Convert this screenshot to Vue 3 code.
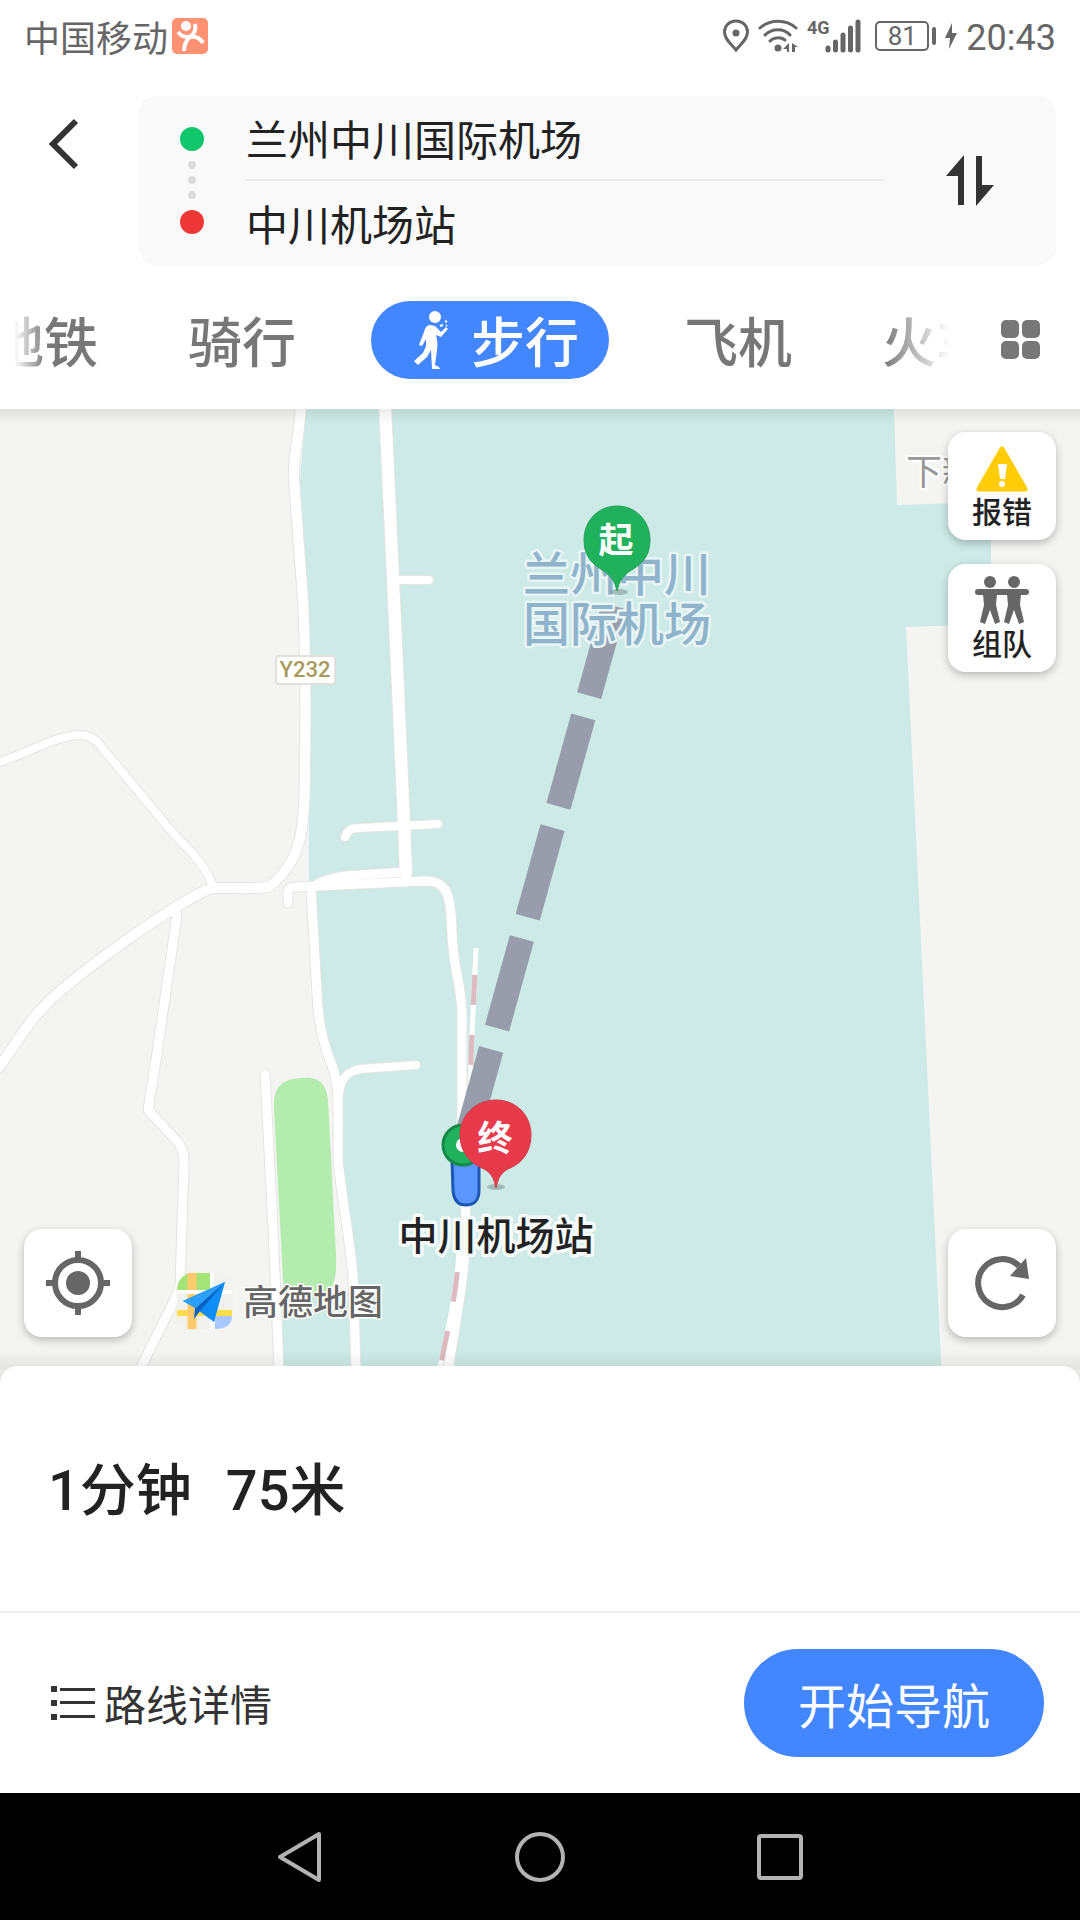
<template>
  <div class="page">
    <header class="header">
      <div class="status-bar">
        <div class="status-left">
          <span class="carrier">中国移动</span>
          <svg width="36" height="36" viewBox="0 0 36 36" aria-hidden="true">
            <rect width="36" height="36" rx="5" fill="#ff9272" />
            <circle cx="14" cy="8" r="5" fill="#fff" />
            <path d="M6 14C10 19 15 20 19 18C23 15 24 11 23 6M19 18C14 22 12 26 12 33M18 19C24 18 28 20 31 25" fill="none" stroke="#fff" stroke-width="4" />
          </svg>
        </div>
        <div class="status-right">
          <svg width="28" height="34" viewBox="0 0 28 34" aria-hidden="true">
            <path d="M14 2C7 2 2.500 7 2.500 13C2.500 20 9 25 14 31C19 25 25.500 20 25.500 13C25.500 7 21 2 14 2Z" fill="none" stroke="#666" stroke-width="3" />
            <circle cx="14" cy="14" r="3.500" fill="#666" />
          </svg>
          <svg class="wifi" width="40" height="34" viewBox="0 0 40 34" aria-hidden="true">
            <path d="M2 9C12 0 28 0 38 9M7 16C14 9 26 9 32 16M12 22C16 18 23 18 27 21" fill="none" stroke="#666" stroke-width="3" stroke-linecap="round" />
            <circle cx="20" cy="29" r="3.500" fill="#666" />
            <path d="M31 24V33H29V30H25ZM34 24L40 28H37V33H34Z" fill="#666" />
          </svg>
          <svg class="signal" width="54" height="34" viewBox="0 0 54 34" aria-hidden="true">
            <text x="0" y="15" class="network">4G</text>
            <path d="M21 29V31M28.500 23V31M36 16V31M43.500 9V31M51 3V31" stroke="#666" stroke-width="5" stroke-linecap="round" />
          </svg>
          <span class="battery">81</span>
          <span class="battery-cap"></span>
          <svg class="bolt" width="14" height="28" viewBox="0 0 14 28" aria-hidden="true">
            <path d="M8 1L1 16H6L5 27L13 11H8Z" fill="#666" />
          </svg>
          <span class="clock">20:43</span>
        </div>
      </div>

      <div class="search">
        <button class="back" type="button" aria-label="返回">
          <svg width="36" height="54" viewBox="0 0 36 54">
            <path d="M31 4L8 27L31 50" fill="none" stroke="#333" stroke-width="6" />
          </svg>
        </button>
        <div class="route-card">
          <div class="route-dots">
            <i class="dot start"></i>
            <i class="dot"></i>
            <i class="dot"></i>
            <i class="dot"></i>
            <i class="dot end"></i>
          </div>
          <div class="route-fields">
            <input v-model="from" type="text" aria-label="起点" />
            <input v-model="to" type="text" aria-label="终点" />
          </div>
          <button class="swap" type="button" aria-label="交换" @click="swap">
            <svg width="48" height="52" viewBox="0 0 48 52">
              <path d="M18 0V50H12V21H0ZM30 1H36V30H48L30 51Z" fill="#333" />
            </svg>
          </button>
        </div>
      </div>

      <nav class="tabs">
        <div class="tab-list">
          <button
            v-for="tab in tabs"
            :key="tab"
            type="button"
            class="tab"
            :class="{ active: tab === currentTab }"
            @click="currentTab = tab"
          >
            <svg v-if="tab === currentTab" width="36" height="60" viewBox="0 0 36 60" aria-hidden="true">
              <circle cx="22" cy="7" r="6" fill="#fff" />
              <path d="M17 15C14 15 12 18 11 22L6 35L9 36L13 29V36L10 43L1 51L5 55L14 47L18 40L19 59H27L26 57L22 55L24 40C25 34 24 29 23 25L28 27L35 19L33 17L28 22L22 16Z" fill="#fff" />
              <path d="M27 16L30 15M32 12L34 11M34 15L33 16" stroke="#fff" stroke-width="2" />
            </svg>
            {{ tab }}
          </button>
        </div>
        <button class="more" type="button" aria-label="更多">
          <svg width="40" height="40" viewBox="0 0 40 40" fill="#777">
            <rect width="18" height="18" rx="5" />
            <rect x="21" width="18" height="18" rx="5" />
            <rect y="21" width="18" height="18" rx="5" />
            <rect x="21" y="21" width="18" height="18" rx="5" />
          </svg>
        </button>
      </nav>
    </header>

    <main class="map">
      <svg class="map-canvas" viewBox="0 409 1080 973" preserveAspectRatio="xMidYMid slice">
        <rect y="409" width="1080" height="973" fill="#f4f4f3" />
        <path d="M306 409L300 480L308 620L309 890L317 1000L330 1060L338 1083V1160L353 1290L280 1300V1382H942L906 627L991 624V502L897 505L894 409Z" fill="#cdeae7" />
        <path d="M300 1078C318 1076 326 1082 328 1100L336 1255C337 1278 334 1292 320 1298H284L274 1110C273 1088 280 1080 300 1078Z" fill="#b4ebae" />

        <g class="road-edge">
          <path v-for="road in roads" :key="road.d" :d="road.d" :stroke-width="road.width + 2" />
        </g>
        <g class="road">
          <path v-for="road in roads" :key="road.d" :d="road.d" :stroke-width="road.width" />
        </g>

        <g fill="none" stroke-width="5">
          <path :d="rail" stroke="#fff" />
          <path :d="rail" stroke="#deb9c0" stroke-dasharray="30 30" stroke-dashoffset="-27" />
          <path d="M459 1250C457 1290 450 1320 440 1368" stroke="#fff" />
          <path d="M459 1250C457 1290 450 1320 440 1368" stroke="#deb9c0" stroke-dasharray="30 30" stroke-dashoffset="-22" />
        </g>

        <rect x="276" y="656" width="59" height="28" rx="3" fill="#fff" stroke="#e0e0dc" stroke-width="2" />
        <text x="305" y="677" class="road-name">Y232</text>
        <text x="906" y="485" class="place">下新</text>

        <path d="M614 606L466 1140" fill="none" stroke="#979daa" stroke-width="25" stroke-dasharray="93 22" />
        <g class="airport">
          <text x="617" y="591">兰州中川</text>
          <text x="617" y="641">国际机场</text>
        </g>

        <path d="M452 1160H479V1191C479 1200 474 1205 466 1205C458 1205 454 1200 453 1191Z" fill="#5b96ff" stroke="#1d57b3" stroke-width="3" />
        <circle cx="463" cy="1145" r="20" fill="#1fb15c" stroke="#158a48" stroke-width="3" />
        <circle cx="463" cy="1145" r="7" fill="#fff" />

        <ellipse cx="619" cy="592" rx="9" ry="3" fill="#829b9a" opacity="0.6" />
        <path d="M617 506C598 506 584 521 584 540C584 558 594 565 604 571C612 577 615 582 617 591C619 582 622 577 630 571C640 565 650 558 650 540C650 521 636 506 617 506Z" fill="#1fb15c" stroke="#2a9d5c" />
        <text x="616" y="553" class="pin-text">起</text>

        <ellipse cx="496" cy="1187" rx="9" ry="3" fill="#829b9a" opacity="0.6" />
        <path d="M496 1100C476 1100 460 1115 460 1135C460 1152 470 1163 482 1168C491 1172 494 1178 496 1188C498 1178 501 1172 510 1168C522 1163 531 1152 531 1135C531 1115 516 1100 496 1100Z" fill="#e93a4b" stroke="#cf3c4b" />
        <text x="495" y="1151" class="pin-text">终</text>
        <text x="496" y="1250" class="station">中川机场站</text>

        <g>
          <rect x="177" y="1273" width="56" height="56" rx="16" fill="#f1f1ee" />
          <path d="M177 1290C177 1280 184 1273 193 1273H210V1290Z" fill="#a5e578" />
          <path d="M215 1316H232C232 1325 225 1329 215 1329Z" fill="#a9c8ff" />
          <path d="M177 1313H232" stroke="#ffdc4b" stroke-width="6" />
          <path d="M192 1273V1329" stroke="#ffca6b" stroke-width="9" />
          <path d="M212 1273V1329M177 1292H232" stroke="#fff" stroke-width="4" />
          <path d="M225 1282L183 1301L195 1308L199 1311L214 1322Z" fill="#0d8df5" />
          <path d="M225 1282L195 1308L194 1319L200 1311Z" fill="#0b62c4" />
          <path d="M225 1282L183 1301L196 1308Z" fill="#2b9ffa" />
          <text x="243" y="1315" class="brand">高德地图</text>
        </g>
      </svg>

      <div class="map-tools top">
        <button class="tool" type="button">
          <svg width="52" height="48" viewBox="0 0 52 48" aria-hidden="true">
            <path d="M26 5L49 45H3Z" fill="#ffcc05" stroke="#ffcc05" stroke-width="5" stroke-linejoin="round" />
            <path d="M22 20H31L29 35H24Z" fill="#fff" />
            <circle cx="26" cy="40" r="3" fill="#fff" />
          </svg>
          报错
        </button>
        <button class="tool" type="button">
          <svg width="54" height="48" viewBox="0 0 54 48" fill="#666" aria-hidden="true">
            <circle cx="15" cy="6" r="6" />
            <circle cx="39" cy="6" r="6" />
            <rect y="13" width="54" height="6" rx="3" />
            <path d="M8 18H22L21 29L25 46L20 48L15 34L10 48L5 46L9 29ZM32 18H46L45 29L49 46L44 48L39 34L34 48L29 46L33 29Z" />
          </svg>
          组队
        </button>
      </div>
      <div class="map-tools bottom">
        <button class="tool" type="button" aria-label="定位">
          <svg width="64" height="64" viewBox="0 0 64 64">
            <circle cx="32" cy="32" r="23" fill="none" stroke="#666" stroke-width="6" />
            <circle cx="32" cy="32" r="12" fill="#666" />
            <path d="M32 0V8M32 56V64M0 32H8M56 32H64" stroke="#666" stroke-width="6" />
          </svg>
        </button>
        <button class="tool" type="button" aria-label="刷新">
          <svg width="64" height="64" viewBox="0 0 64 64">
            <path d="M53 44A24 24 0 1 1 49 15" fill="none" stroke="#666" stroke-width="6" />
            <path d="M56 7L59 28L40 25Z" fill="#666" />
          </svg>
        </button>
      </div>
    </main>

    <section class="sheet">
      <div class="summary">
        <strong>1分钟</strong>
        <strong>75米</strong>
      </div>
      <div class="actions">
        <button class="detail" type="button">
          <svg width="44" height="34" viewBox="0 0 44 34" fill="#333" aria-hidden="true">
            <path d="M0 0H6V6H0ZM9 2H44V5H9ZM0 14H6V20H0ZM9 15H44V18H9ZM0 28H6V34H0ZM9 29H44V32H9Z" />
          </svg>
          路线详情
        </button>
        <button class="go" type="button">开始导航</button>
      </div>
    </section>

    <footer class="system-nav">
      <button type="button" aria-label="后退">
        <svg width="54" height="54" viewBox="0 0 54 54">
          <path d="M46 4V50L7 27Z" />
        </svg>
      </button>
      <button type="button" aria-label="主屏幕">
        <svg width="54" height="54" viewBox="0 0 54 54">
          <circle cx="27" cy="27" r="23" />
        </svg>
      </button>
      <button type="button" aria-label="最近任务">
        <svg width="54" height="54" viewBox="0 0 54 54">
          <rect x="6" y="6" width="42" height="42" rx="2" />
        </svg>
      </button>
    </footer>
  </div>
</template>

<script setup>
import { ref } from 'vue';

const from = ref('兰州中川国际机场');
const to = ref('中川机场站');

const tabs = ['地铁', '骑行', '步行', '飞机', '火车'];
const currentTab = ref('步行');

const swap = () => {
  [from.value, to.value] = [to.value, from.value];
};

const rail = 'M476 948L472 1033L469 1120';

const roads = [
  { width: 8, d: 'M0 762C30 752 58 735 80 735C92 735 98 742 104 750L172 832C190 850 205 865 213 886' },
  { width: 10, d: 'M301 405C299 440 293 455 294 480L303 600C306 660 306 700 305 767C305 830 302 860 270 886C264 889 240 888 213 888C185 895 60 985 43 1008C28 1020 14 1050 -4 1070' },
  { width: 9, d: 'M177 915L156 1060L148 1110L176 1140C182 1147 184 1152 184 1165L180 1287C176 1300 158 1330 140 1370' },
  { width: 12, d: 'M385 405L394 600L404 823L406 873' },
  { width: 8, d: 'M398 580H429' },
  { width: 8, d: 'M345 837C348 829 352 828 360 828L438 824' },
  { width: 9, d: 'M404 872L345 876C330 878 322 881 313 887' },
  { width: 9, d: 'M288 903V893C288 888 290 887 295 887L425 881C448 881 451 896 452 933C453 970 461 980 462 1013V1130C462 1170 466 1190 466 1230C465 1275 456 1320 448 1370' },
  { width: 9, d: 'M311 888L317 993C318 1020 322 1040 330 1060C340 1085 338 1100 338 1160C342 1200 350 1240 353 1277L356 1370' },
  { width: 8, d: 'M339 1096C340 1078 347 1072 360 1069L416 1065' },
  { width: 9, d: 'M265 1074L273 1227L279 1370' }
];
</script>

<style>
body {
  margin: 0;
}
</style>

<style scoped>
.page {
  display: flex;
  flex-direction: column;
  min-height: 100vh;
  background: #fff;
  color: #222;
  font-family: Roboto, "Noto Sans CJK SC", sans-serif;
}

button {
  margin: 0;
  padding: 0;
  border: none;
  background: none;
  color: inherit;
  font: inherit;
  cursor: pointer;
}

svg {
  display: block;
  flex-shrink: 0;
}

.carrier,
.tab,
.tool,
.detail,
.go {
  font-family: "Noto Sans CJK SC", sans-serif;
}

.header {
  padding-bottom: 30px;
}

.status-bar {
  display: flex;
  justify-content: space-between;
  align-items: center;
  height: 72px;
  padding: 0 24px;
  color: #666;
  font-size: 36px;
  line-height: 40px;
}

.status-left,
.status-right {
  display: flex;
  align-items: center;
}

.status-left {
  gap: 4px;
}

.wifi {
  margin-left: 8px;
}

.signal {
  margin-left: 9px;
  overflow: visible;
}

.network {
  fill: #666;
  font-size: 18px;
  font-weight: 700;
}

.battery {
  box-sizing: border-box;
  width: 54px;
  height: 30px;
  margin-left: 14px;
  border: 2px solid #666;
  border-radius: 5px;
  font-size: 26px;
  line-height: 27px;
  text-align: center;
}

.battery-cap {
  width: 4px;
  height: 18px;
  margin-left: 3px;
  border-radius: 2px;
  background: #666;
}

.bolt {
  margin: 0 8px;
}

.clock {
  padding-top: 3px;
}

.search {
  display: flex;
  align-items: flex-start;
  padding: 24px 24px 0 0;
}

.back {
  width: 138px;
  padding: 21px 0 21px 45px;
}

.route-card {
  display: flex;
  align-items: center;
  flex: 1;
  height: 169px;
  border-radius: 18px;
  background: #f9f9f9;
}

.route-dots {
  display: flex;
  flex-direction: column;
  align-items: center;
  gap: 7px;
  width: 108px;
}

.dot {
  width: 8px;
  height: 8px;
  border-radius: 50%;
  background: #dcdcdc;
}

.dot.start,
.dot.end {
  width: 24px;
  height: 24px;
}

.dot.start {
  margin-bottom: 3px;
  background: #0fc66c;
}

.dot.end {
  margin-top: 4px;
  background: #f03738;
}

.route-fields {
  flex: 1;
  min-width: 0;
}

.route-fields input {
  box-sizing: border-box;
  display: block;
  width: 100%;
  height: 84px;
  padding: 0;
  border: none;
  outline: none;
  background: none;
  color: #222;
  font: inherit;
  font-size: 42px;
}

.route-fields input:first-child {
  border-bottom: 2px solid #ececec;
}

.swap {
  display: flex;
  justify-content: center;
  width: 172px;
}

.tabs {
  display: flex;
  align-items: center;
  padding: 36px 4px 0 14px;
}

.tab-list {
  display: flex;
  justify-content: center;
  flex: 1;
  min-width: 0;
  overflow: hidden;
  -webkit-mask-image: linear-gradient(to right, transparent, #000 32px, #000 calc(100% - 84px), transparent calc(100% - 16px));
  mask-image: linear-gradient(to right, transparent, #000 32px, #000 calc(100% - 84px), transparent calc(100% - 16px));
}

.tab {
  display: flex;
  align-items: center;
  flex-shrink: 0;
  gap: 22px;
  height: 78px;
  padding: 0 45px;
  color: #777;
  font-size: 54px;
  font-weight: 500;
  line-height: 78px;
}

.tab.active {
  margin: 0 30px;
  padding: 0 30px 0 42px;
  border-radius: 39px;
  background: #4287ff;
  color: #fff;
}

.more {
  display: flex;
  justify-content: center;
  width: 110px;
}

.map {
  position: relative;
  flex: 1;
  min-height: 720px;
  overflow: hidden;
}

.map::after {
  content: "";
  position: absolute;
  inset: 0;
  background:
    linear-gradient(to bottom, rgba(0, 0, 0, 0.08), transparent 16px),
    linear-gradient(to top, rgba(0, 0, 0, 0.06) 16px, transparent 32px);
  pointer-events: none;
}

.map-canvas {
  position: absolute;
  width: 100%;
  height: 100%;
}

.road,
.road-edge {
  fill: none;
  stroke: #fff;
  stroke-linecap: round;
  stroke-linejoin: round;
}

.road-edge {
  stroke: #e4e5e3;
}

.map-canvas text {
  paint-order: stroke;
  stroke-linejoin: round;
}

.road-name {
  fill: #a89a5c;
  font-size: 22px;
  font-weight: 500;
  text-anchor: middle;
}

.place {
  fill: #999;
  stroke: #fff;
  stroke-width: 4px;
  font-size: 36px;
}

.airport {
  fill: #8fb3cb;
  stroke: #e8f5f5;
  stroke-width: 5px;
  font-size: 47px;
  font-weight: 500;
  text-anchor: middle;
}

.pin-text {
  fill: #fff;
  font-size: 35px;
  font-weight: 700;
  text-anchor: middle;
}

.station {
  fill: #222;
  stroke: #f4fafa;
  stroke-width: 7px;
  font-size: 39px;
  font-weight: 500;
  text-anchor: middle;
}

.brand {
  fill: #666;
  stroke: #fff;
  stroke-width: 3px;
  font-size: 35px;
  font-weight: 500;
}

.map-tools {
  position: absolute;
  right: 24px;
  z-index: 1;
  display: flex;
}

.map-tools.top {
  top: 23px;
  flex-direction: column;
  gap: 24px;
}

.map-tools.bottom {
  left: 24px;
  bottom: 45px;
  justify-content: space-between;
}

.tool {
  display: flex;
  flex-direction: column;
  align-items: center;
  justify-content: center;
  box-sizing: border-box;
  width: 108px;
  height: 108px;
  border-radius: 18px;
  background: #fff;
  box-shadow: 0 3px 8px rgba(0, 0, 0, 0.25);
  font-size: 30px;
  font-weight: 500;
  line-height: 36px;
}

.sheet {
  position: relative;
  z-index: 1;
  margin-top: -16px;
  border-radius: 18px 18px 0 0;
  background: #fff;
}

.summary {
  display: flex;
  gap: 34px;
  padding: 83px 48px 77px;
  border-bottom: 2px solid #efefef;
  font-size: 56px;
  line-height: 85px;
}

.summary strong {
  font-weight: 500;
}

.actions {
  display: flex;
  justify-content: space-between;
  align-items: center;
  padding: 36px 36px 36px 51px;
}

.detail {
  display: flex;
  align-items: center;
  gap: 9px;
  color: #333;
  font-size: 42px;
  line-height: 60px;
}

.go {
  width: 300px;
  height: 108px;
  border-radius: 54px;
  background: #4287ff;
  color: #fff;
  font-size: 48px;
  line-height: 108px;
}

.system-nav {
  display: flex;
  justify-content: center;
  align-items: center;
  gap: 186px;
  height: 127px;
  background: #000;
}

.system-nav svg {
  fill: none;
  stroke: #b2b2b2;
  stroke-width: 4px;
  stroke-linejoin: round;
}
</style>
